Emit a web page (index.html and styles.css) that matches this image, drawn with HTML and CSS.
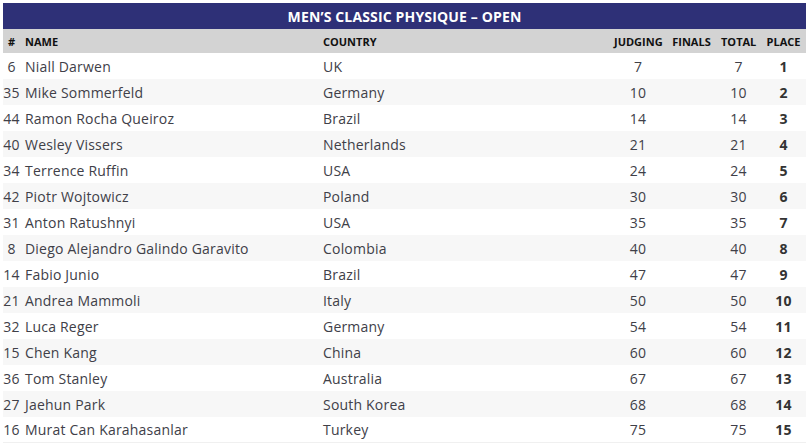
FILE: index.html
```html
<!DOCTYPE html>
<html>
<head>
<meta charset="utf-8">
<link rel="stylesheet" href="styles.css">
</head>
<body>
<table class="results">
  <colgroup>
    <col class="c-num"><col class="c-name"><col class="c-country"><col class="c-judging"><col class="c-finals"><col class="c-total"><col class="c-place">
  </colgroup>
  <thead>
    <tr class="title-row"><th colspan="7">MEN’S CLASSIC PHYSIQUE – OPEN</th></tr>
    <tr class="head-row">
      <th class="ctr">#</th><th>NAME</th><th>COUNTRY</th><th class="ctr">JUDGING</th><th class="ctr">FINALS</th><th class="ctr">TOTAL</th><th class="ctr">PLACE</th>
    </tr>
  </thead>
  <tbody>
    <tr><td class="ctr">6</td><td>Niall Darwen</td><td>UK</td><td class="ctr">7</td><td></td><td class="ctr">7</td><td class="ctr place">1</td></tr>
    <tr><td class="ctr">35</td><td>Mike Sommerfeld</td><td>Germany</td><td class="ctr">10</td><td></td><td class="ctr">10</td><td class="ctr place">2</td></tr>
    <tr><td class="ctr">44</td><td>Ramon Rocha Queiroz</td><td>Brazil</td><td class="ctr">14</td><td></td><td class="ctr">14</td><td class="ctr place">3</td></tr>
    <tr><td class="ctr">40</td><td>Wesley Vissers</td><td>Netherlands</td><td class="ctr">21</td><td></td><td class="ctr">21</td><td class="ctr place">4</td></tr>
    <tr><td class="ctr">34</td><td>Terrence Ruffin</td><td>USA</td><td class="ctr">24</td><td></td><td class="ctr">24</td><td class="ctr place">5</td></tr>
    <tr><td class="ctr">42</td><td>Piotr Wojtowicz</td><td>Poland</td><td class="ctr">30</td><td></td><td class="ctr">30</td><td class="ctr place">6</td></tr>
    <tr><td class="ctr">31</td><td>Anton Ratushnyi</td><td>USA</td><td class="ctr">35</td><td></td><td class="ctr">35</td><td class="ctr place">7</td></tr>
    <tr><td class="ctr">8</td><td>Diego Alejandro Galindo Garavito</td><td>Colombia</td><td class="ctr">40</td><td></td><td class="ctr">40</td><td class="ctr place">8</td></tr>
    <tr><td class="ctr">14</td><td>Fabio Junio</td><td>Brazil</td><td class="ctr">47</td><td></td><td class="ctr">47</td><td class="ctr place">9</td></tr>
    <tr><td class="ctr">21</td><td>Andrea Mammoli</td><td>Italy</td><td class="ctr">50</td><td></td><td class="ctr">50</td><td class="ctr place">10</td></tr>
    <tr><td class="ctr">32</td><td>Luca Reger</td><td>Germany</td><td class="ctr">54</td><td></td><td class="ctr">54</td><td class="ctr place">11</td></tr>
    <tr><td class="ctr">15</td><td>Chen Kang</td><td>China</td><td class="ctr">60</td><td></td><td class="ctr">60</td><td class="ctr place">12</td></tr>
    <tr><td class="ctr">36</td><td>Tom Stanley</td><td>Australia</td><td class="ctr">67</td><td></td><td class="ctr">67</td><td class="ctr place">13</td></tr>
    <tr><td class="ctr">27</td><td>Jaehun Park</td><td>South Korea</td><td class="ctr">68</td><td></td><td class="ctr">68</td><td class="ctr place">14</td></tr>
    <tr><td class="ctr">16</td><td>Murat Can Karahasanlar</td><td>Turkey</td><td class="ctr">75</td><td></td><td class="ctr">75</td><td class="ctr place">15</td></tr>
  </tbody>
</table>
</body>
</html>
```

FILE: styles.css
```css
html, body {
  margin: 0;
  padding: 0;
  background: #ffffff;
}
body {
  padding: 3px 2px 0 3px;
  font-family: "Open Sans", "Liberation Sans", sans-serif;
}
.results {
  width: 803px;
  border-collapse: collapse;
  table-layout: fixed;
}
.c-num { width: 17px; }
.c-name { width: 298px; }
.c-country { width: 291px; }
.c-judging { width: 58px; }
.c-finals { width: 49px; }
.c-total { width: 45px; }
.c-place { width: 45px; }

.results th, .results td {
  padding: 0 5px;
  white-space: nowrap;
  overflow: visible;
}
.results th:first-child, .results td:first-child {
  padding: 0;
}
.title-row th {
  background: #2e3077;
  color: #ffffff;
  font-size: 14px;
  font-weight: 700;
  letter-spacing: 0.15px;
  height: 26px;
  text-align: center;
  padding: 0;
}
.head-row th {
  background: #d3d3d3;
  color: #111111;
  font-size: 11px;
  font-weight: 700;
  height: 24px;
  text-align: left;
}
.results td {
  height: 26px;
  font-size: 14px;
  letter-spacing: 0.2px;
  color: #404048;
}
.results tbody tr:nth-child(even) td {
  background: #f7f7f7;
}
.results tbody tr:last-child td {
  border-bottom: 1px solid #f0f0f0;
  height: 25px;
}
.results .ctr {
  text-align: center;
}
.results .place {
  font-weight: 700;
  color: #333333;
}
```
